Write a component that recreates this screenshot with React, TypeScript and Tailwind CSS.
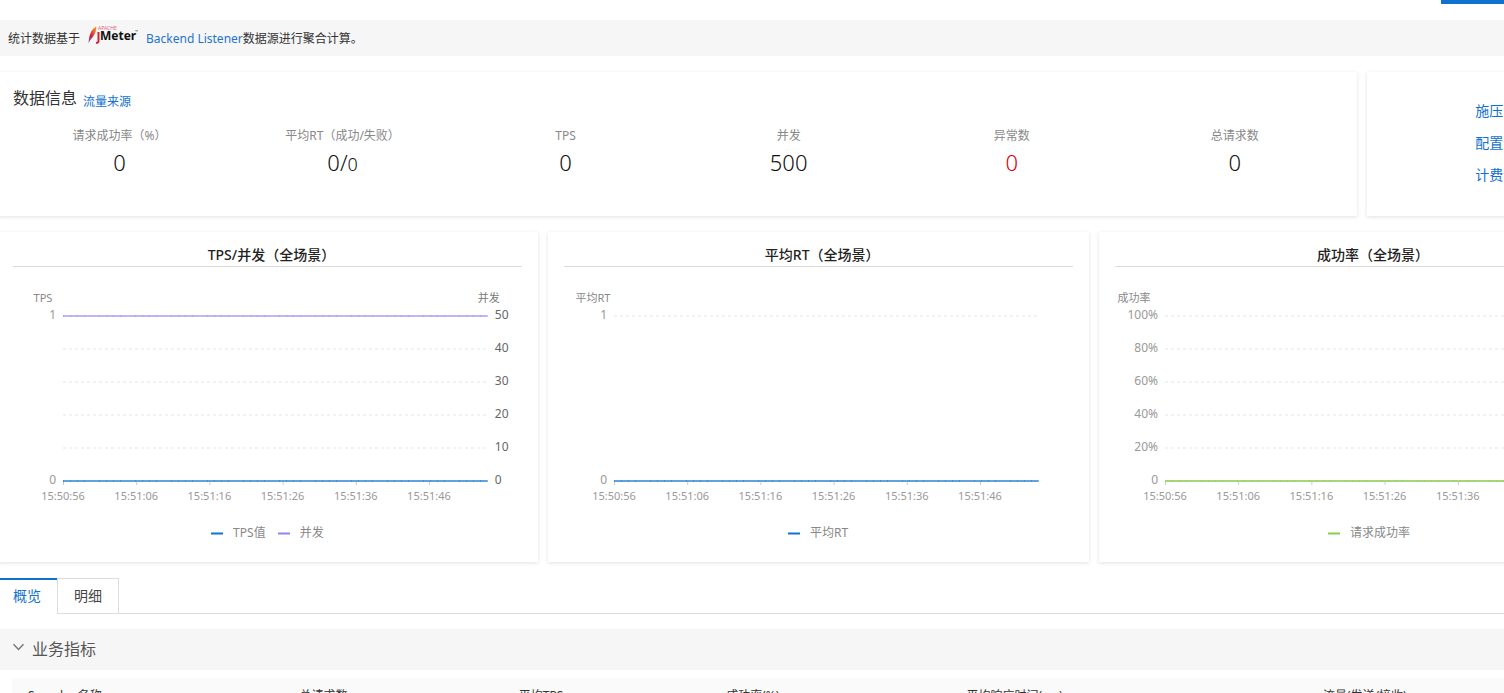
import React from "react";

type Series = { name: string; stroke: string; swatch: string; value: number };

type ChartProps = {
  title: string;
  axisName: string;
  axisNameX: number;
  labels: { text: string; at: number }[];
  gridAt: number[];
  series: Series[];
  rightName?: string;
  rightLabels?: string[];
};

const TIMES = ["15:50:56", "15:51:06", "15:51:16", "15:51:26", "15:51:36", "15:51:46"];
const TOP = 34;
const BOTTOM = 199;

const yOf = (v: number) => BOTTOM - v * (BOTTOM - TOP);

function ChartCard({ title, axisName, axisNameX, labels, gridAt, series, rightName, rightLabels }: ChartProps) {
  return (
    <section className="min-w-0 flex-1 bg-white px-4 pt-3 pb-[19px] shadow-[0_1px_4px_rgba(0,0,0,0.12)]">
      <h3 className="border-b border-[#dcdcdc] pl-2 text-center text-[14px] leading-[22px] font-medium text-[#222]">
        {title}
      </h3>
      <div className="mt-[15px] pr-[34px] pl-[50px]">
        <svg className="block h-[228px] w-full overflow-visible text-[11px]" role="img" aria-label={title}>
          <text x={axisNameX} y={20} textAnchor="middle" fill="#888">
            {axisName}
          </text>
          {rightName && (
            <svg x="100%" className="overflow-visible">
              <text x={1} y={20} textAnchor="middle" fill="#777">
                {rightName}
              </text>
              {rightLabels?.map((t, i) => (
                <text key={t} x={7} y={yOf(1 - i / 5) + 3} fill="#666" className="text-[12px]">
                  {t}
                </text>
              ))}
            </svg>
          )}
          {gridAt.map((v) => (
            <line key={v} x1="0" x2="100%" y1={yOf(v)} y2={yOf(v)} stroke="#f2f2f2" strokeWidth="2" strokeDasharray="3 3" />
          ))}
          {labels.map((l) => (
            <text key={l.text} x={-7} y={yOf(l.at) + 3} textAnchor="end" fill="#999" className="text-[12px]">
              {l.text}
            </text>
          ))}
          {TIMES.map((t, i) => (
            <svg key={t} x={`${i * 17.23}%`} className="overflow-visible">
              <line x1="0.5" x2="0.5" y1={BOTTOM} y2={BOTTOM + 4} stroke="#ccc" />
              <text x={0} y={BOTTOM + 19} textAnchor="middle" fill="#999">
                {t}
              </text>
            </svg>
          ))}
          {series.map((s) => (
            <g key={s.name}>
              <line x1="0" x2="100%" y1={yOf(s.value)} y2={yOf(s.value)} stroke={s.stroke} strokeWidth="2" />
              <line
                x1="0"
                x2="100%"
                y1={yOf(s.value)}
                y2={yOf(s.value)}
                stroke={s.swatch}
                strokeOpacity="0.4"
                strokeWidth="2"
                strokeDasharray="1 6 1 6 1 14 1 6"
                strokeDashoffset="-7"
              />
            </g>
          ))}
        </svg>
      </div>
      <ul className="mt-[13px] flex justify-center gap-3 text-[12px] leading-5 text-[#888]">
        {series.map((s) => (
          <li key={s.name} className="flex items-center gap-2.5">
            <svg className="h-[3px] w-3" viewBox="0 0 12 3">
              <path d="M0 1.5h12" stroke={s.swatch} strokeWidth="2" />
            </svg>
            {s.name}
          </li>
        ))}
      </ul>
    </section>
  );
}

function JMeterLogo() {
  return (
    <svg className="mx-2 mb-2 h-5 w-[50px]" viewBox="0 0 50 20" role="img" aria-label="JMeter">
      <defs>
        <linearGradient id="feather" x1="0" y1="1" x2="0.6" y2="0">
          <stop offset="0" stopColor="#8a5aa8" />
          <stop offset="0.45" stopColor="#c8203f" />
          <stop offset="1" stopColor="#f4872a" />
        </linearGradient>
      </defs>
      <path d="M0.6 18.500C0.8 11 3 4 8.200 1.500C8.800 6 6.200 10.500 3 14C1.800 15.500 1.200 17 0.600 18.500Z" fill="url(#feather)" />
      <text x="10" y="5" fontSize="5" fill="#dc6474">APACHE</text>
      <path d="M10.500 7v9q0 2-2.500 1.800" fill="none" stroke="#d2223a" strokeWidth="2" />
      <text x="12" y="15" fontSize="12" fontWeight="700" fill="#111">Meter</text>
      <text x="47" y="8" fontSize="4" fill="#555">™</text>
    </svg>
  );
}

const STATS = [
  { label: "请求成功率（%）", value: "0" },
  { label: "平均RT（成功/失败）", value: "0/", tail: "0" },
  { label: "TPS", value: "0" },
  { label: "并发", value: "500" },
  { label: "异常数", value: "0", alert: true },
  { label: "总请求数", value: "0" },
];

export default function App() {
  return (
    <div className="h-screen overflow-hidden bg-white font-['Noto_Sans','Noto_Sans_CJK_SC',sans-serif] text-[#333]">
      <header className="flex h-5 items-start justify-end">
        <button type="button" aria-label="操作" className="h-1 w-[63px] bg-[#1171d0]" />
      </header>

      <p className="flex h-9 items-center bg-[#f6f6f6] px-2 pt-0.5 text-[12px]">
        统计数据基于
        <JMeterLogo />
        <a href="#listener" className="text-[#1f74d0]">
          Backend Listener
        </a>
        数据源进行聚合计算。
      </p>

      <main className="-ml-[3px] w-[109.2%]">
        <div className="mt-4 flex gap-2.5">
          <section className="h-36 min-w-0 flex-5 bg-white shadow-[0_1px_4px_rgba(0,0,0,0.12)]">
            <div className="flex items-end gap-1.5 px-4 pt-3.5">
              <h2 className="text-[16px] leading-6">数据信息</h2>
              <a href="#source" className="text-[12px] leading-4 text-[#1171d0]">
                流量来源
              </a>
            </div>
            <dl className="mt-4 grid grid-cols-6 px-[11px] text-center">
              {STATS.map((s) => (
                <div key={s.label}>
                  <dt className="text-[12px] leading-5 text-[#888]">{s.label}</dt>
                  <dd
                    className={
                      s.alert
                        ? "mt-0.5 text-[22px] leading-7 font-light text-[#d9000d]"
                        : "mt-0.5 text-[22px] leading-7 font-light text-[#111]"
                    }
                  >
                    {s.value}
                    {s.tail && <span className="text-[18px]">{s.tail}</span>}
                  </dd>
                </div>
              ))}
            </dl>
          </section>
          <aside className="flex h-36 min-w-0 flex-1 flex-col items-center bg-white pt-[23px] text-[14px] leading-8 text-[#1171d0] shadow-[0_1px_4px_rgba(0,0,0,0.12)]">
            <a href="#load">施压配置</a>
            <a href="#config">配置详情</a>
            <a href="#billing">计费说明</a>
          </aside>
        </div>

        <div className="mt-4 flex gap-2.5">
          <ChartCard
            title="TPS/并发（全场景）"
            axisName="TPS"
            axisNameX={-20}
            labels={[
              { text: "1", at: 1 },
              { text: "0", at: 0 },
            ]}
            gridAt={[0.2, 0.4, 0.6, 0.8]}
            series={[
              { name: "TPS值", stroke: "#62a3dc", swatch: "#1171d0", value: 0 },
              { name: "并发", stroke: "#c3b4f8", swatch: "#9a80f5", value: 1 },
            ]}
            rightName="并发"
            rightLabels={["50", "40", "30", "20", "10", "0"]}
          />
          <ChartCard
            title="平均RT（全场景）"
            axisName="平均RT"
            axisNameX={-21}
            labels={[
              { text: "1", at: 1 },
              { text: "0", at: 0 },
            ]}
            gridAt={[1]}
            series={[{ name: "平均RT", stroke: "#62a3dc", swatch: "#1171d0", value: 0 }]}
          />
          <ChartCard
            title="成功率（全场景）"
            axisName="成功率"
            axisNameX={-31}
            labels={[
              { text: "100%", at: 1 },
              { text: "80%", at: 0.8 },
              { text: "60%", at: 0.6 },
              { text: "40%", at: 0.4 },
              { text: "20%", at: 0.2 },
              { text: "0", at: 0 },
            ]}
            gridAt={[0.2, 0.4, 0.6, 0.8, 1]}
            series={[{ name: "请求成功率", stroke: "#a5d67c", swatch: "#86d04a", value: 0 }]}
          />
        </div>
      </main>

      <div role="tablist" className="mt-4 flex h-9 text-[14px]">
        <button
          type="button"
          role="tab"
          aria-selected="true"
          className="border-t-2 border-[#1171d0] pr-4 pb-1 pl-[13px] text-[#1171d0]"
        >
          概览
        </button>
        <button type="button" role="tab" aria-selected="false" className="border border-[#dcdcdc] px-4 pb-0.5 text-[#444]">
          明细
        </button>
        <div className="flex-1 border-b border-[#dcdcdc]" />
      </div>

      <h2 className="mt-[15px] bg-[#f6f6f6] text-[16px] text-[#555]">
        <button type="button" aria-expanded="true" className="flex h-[41px] items-center gap-2 pb-0.5 pl-[13px]">
          <svg className="mb-1 h-2 w-[11px]" viewBox="0 0 11 8" fill="none" stroke="#777" strokeWidth="1.5">
            <path d="M0.500 1.200L5.500 6.500L10.500 1.200" />
          </svg>
          业务指标
        </button>
      </h2>

      <div className="mt-2 pl-3">
        <table className="w-full table-fixed bg-[#fafafa] text-left text-[12px] leading-5">
          <thead>
            <tr className="h-9 text-[#333]">
              <th className="w-[18.2%] pl-4 font-normal">Sampler 名称</th>
              <th className="w-[14.7%] pl-4 font-normal">总请求数</th>
              <th className="w-[13.9%] pl-4 font-normal">平均TPS</th>
              <th className="w-[16.1%] pl-4 font-normal">成功率(%)</th>
              <th className="w-[23.9%] pl-4 font-normal">平均响应时间(ms)</th>
              <th className="pl-4 font-normal">流量(发送/接收)</th>
            </tr>
          </thead>
        </table>
      </div>
    </div>
  );
}
